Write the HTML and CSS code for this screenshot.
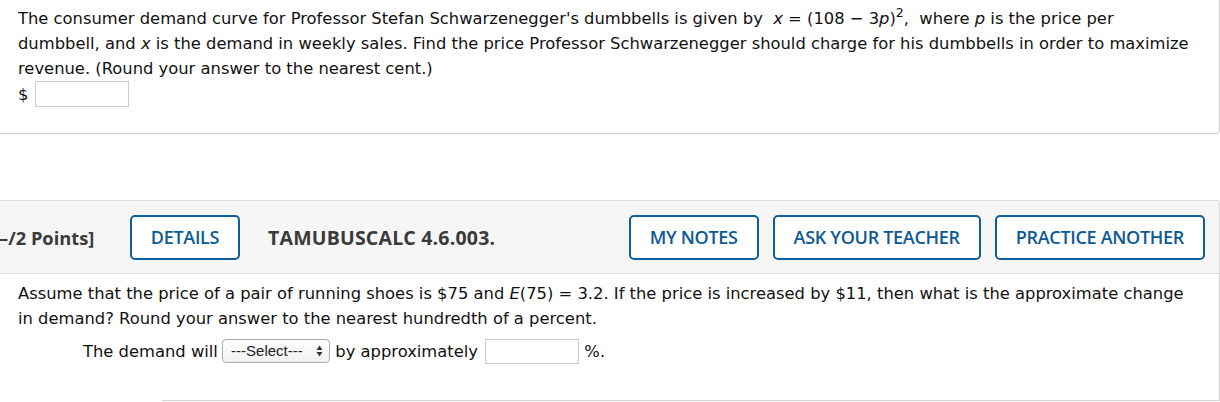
FILE: index.html
```html
<!DOCTYPE html>
<html>
<head>
<meta charset="utf-8">
<link rel="stylesheet" href="styles.css">
</head>
<body>
<div class="card card-top">
  <p class="q">The consumer demand curve for Professor Stefan Schwarzenegger's dumbbells is given by&nbsp; <i>x</i> = (108 − 3<i>p</i>)<sup>2</sup>,&nbsp; where <i>p</i> is the price per<br>dumbbell, and <i>x</i> is the demand in weekly sales. Find the price Professor Schwarzenegger should charge for his dumbbells in order to maximize<br>revenue. (Round your answer to the nearest cent.)</p>
  <div class="ans"><span>$</span><input class="box" type="text"></div>
</div>

<div class="qhead">
  <span class="pts">–/2 Points]</span>
  <button class="btn btn-details">DETAILS</button>
  <span class="code">TAMUBUSCALC 4.6.003.</span>
  <div class="spacer"></div>
  <div class="actions">
    <button class="btn">MY NOTES</button>
    <button class="btn">ASK YOUR TEACHER</button>
    <button class="btn">PRACTICE ANOTHER</button>
  </div>
</div>

<div class="card card-bottom">
  <p class="q">Assume that the price of a pair of running shoes is $75 and <i>E</i>(75) = 3.2. If the price is increased by $11, then what is the approximate change<br>in demand? Round your answer to the nearest hundredth of a percent.</p>
  <div class="fill">The demand will <span class="sel"><span class="sel-text">---Select---</span><svg class="arr" width="7" height="12" viewBox="0 0 7 12"><path d="M3.5 0.5 L6.5 5 H0.5 Z M3.5 11.5 L6.5 7 H0.5 Z" fill="#333"/></svg></span> by approximately <input class="box box2" type="text"> %.</div>
</div>
<div class="bottom-line"></div>
</body>
</html>
```

FILE: styles.css
```css
html, body {
  margin: 0;
  padding: 0;
  background: #fff;
}
body {
  font-family: "DejaVu Sans", Verdana, sans-serif;
  font-size: 16.35px;
  color: #111;
  width: 1220px;
  overflow: hidden;
}
.card {
  box-sizing: border-box;
  width: 1220px;
  border-right: 1px solid #cfcfcf;
  background: #fff;
}
.card-top {
  height: 134px;
  border-bottom: 1px solid #cfcfcf;
  border-bottom-right-radius: 4px;
  padding: 6px 0 0 18px;
}
.q {
  margin: 0;
  line-height: 25px;
  padding-right: 4px;
  white-space: nowrap;
}
.q sup {
  font-size: 12.5px;
  line-height: 0;
  vertical-align: 7px;
}
.ans {
  display: flex;
  align-items: center;
  gap: 7px;
  height: 26px;
}
.box {
  box-sizing: border-box;
  width: 94px;
  height: 26px;
  border: 1px solid #cccccc;
  border-radius: 0;
  margin: 0;
  padding: 0;
  background: #fff;
}
.qhead {
  box-sizing: border-box;
  margin-top: 66px;
  width: 1220px;
  height: 74px;
  background: #f6f6f6;
  border-top: 1px solid #dcdcdc;
  border-bottom: 1px solid #dcdcdc;
  border-right: 1px solid #dcdcdc;
  border-top-right-radius: 3px;
  display: flex;
  align-items: center;
  padding: 0 14px 0 0;
  font-family: "Open Sans", sans-serif;
}
.pts {
  font-weight: 700;
  font-size: 18.3px;
  color: #3a3a3a;
  margin-left: -1px;
  width: 131px;
  white-space: nowrap;
}
.code {
  font-weight: 700;
  font-size: 19.5px;
  color: #3a3a3a;
  margin-left: 28px;
  letter-spacing: 0.2px;
}
.spacer { flex: 1; }
.actions {
  display: flex;
  gap: 14px;
}
.btn {
  box-sizing: border-box;
  height: 45px;
  border: 2.5px solid #0e5f9c;
  border-radius: 5px;
  background: #fff;
  color: #0c5a94;
  font-family: "Open Sans", sans-serif;
  font-weight: 600;
  font-size: 18px;
  padding: 0 19px;
  letter-spacing: -0.3px;
  margin: 0;
}
.btn-details { width: 110px; padding: 0; }
.card-bottom {
  height: 127px;
  padding: 7px 0 0 18px;
}
.fill {
  margin-top: 8px;
  padding-left: 65px;
  line-height: 25px;
}
.sel {
  position: relative;
  display: inline-block;
  box-sizing: border-box;
  width: 108px;
  height: 24px;
  border: 1px solid #adadad;
  border-radius: 4px;
  background: linear-gradient(#ffffff, #f1f1f1);
  vertical-align: top;
  font-family: "Liberation Sans", Arial, sans-serif;
  font-size: 15px;
  line-height: 22px;
  color: #222;
  margin: 0 0 0 -1px;
}
.sel-text {
  padding-left: 8px;
}
.arr {
  position: absolute;
  right: 6px;
  top: 5px;
}
.box2 {
  width: 94px;
  height: 25px;
  margin-left: 2px;
  margin-right: 0;
  vertical-align: top;
}
.bottom-line {
  margin-left: 162px;
  width: 1058px;
  box-sizing: border-box;
  height: 2px;
  border-bottom: 1px solid #cfcfcf;
  border-right: 1px solid #cfcfcf;
  border-bottom-right-radius: 4px;
  margin-top: -2px;
}
```
